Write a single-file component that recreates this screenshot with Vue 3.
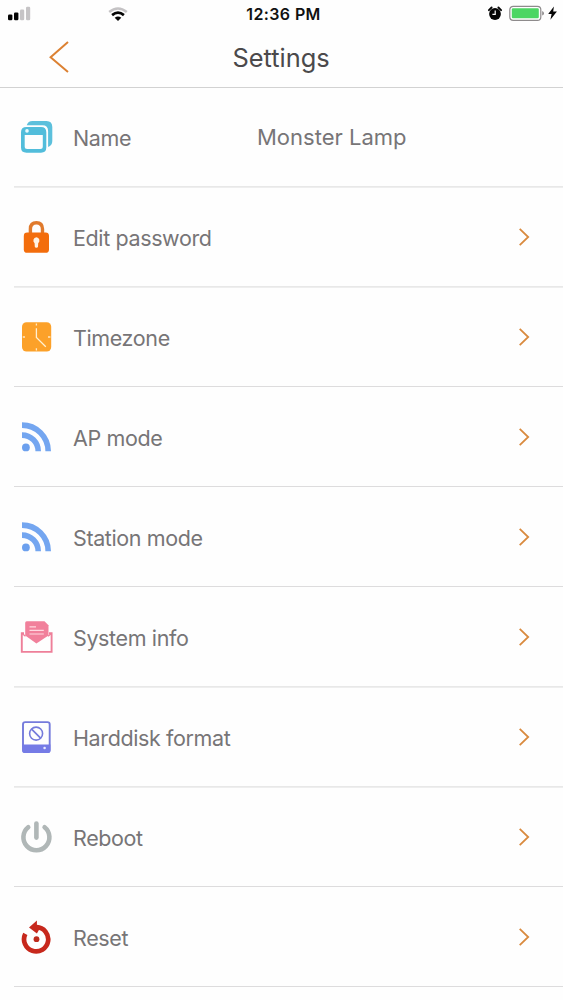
<script setup>
const rows = [
  { icon: 'windows', label: 'Name', value: 'Monster Lamp', soft: true },
  { icon: 'lock', label: 'Edit password', soft: true },
  { icon: 'clock', label: 'Timezone' },
  { icon: 'signal', label: 'AP mode' },
  { icon: 'signal', label: 'Station mode' },
  { icon: 'mail', label: 'System info', soft: true },
  { icon: 'disk', label: 'Harddisk format', soft: true },
  { icon: 'power', label: 'Reboot' },
  { icon: 'reset', label: 'Reset' },
]
</script>

<template>
  <main class="screen">
    <div class="status">
      <div class="left">
        <svg class="bars" width="24" height="16" viewBox="0 0 24 16">
          <rect x="0" y="8.6" width="4.4" height="5.6" rx="1.2" fill="#050505" />
          <rect x="6" y="6.4" width="4.4" height="7.8" rx="1.2" fill="#050505" />
          <rect x="12" y="3.6" width="4.2" height="10.6" rx="1.2" fill="#c6c4c6" />
          <rect x="18" y="0.8" width="4.2" height="13.4" rx="1.2" fill="#c6c4c6" />
        </svg>
        <svg class="wifi" width="20" height="15" viewBox="0 0 20 15" fill="none">
          <path d="M1.2 5Q10 -2 18.8 5" stroke="#c4c2c4" stroke-width="2.6" />
          <path d="M4.1 8.1Q10 3.2 15.9 8.1" stroke="#050505" stroke-width="2.7" />
          <path d="M6.7 10.8Q10 8.2 13.3 10.8L10 14Z" fill="#050505" />
        </svg>
      </div>
      <span class="time">12:36 PM</span>
      <div class="right">
        <svg width="14" height="15" viewBox="0 0 14 15" fill="none">
          <circle cx="7" cy="8" r="5.9" fill="#050505" />
          <path d="M0.9 4.2L3.6 1.5M13.1 4.2L10.4 1.5" stroke="#050505" stroke-width="1.8" stroke-linecap="round" />
          <path d="M7.2 4.5V8.4H4.4" stroke="#fff" stroke-width="1.2" />
        </svg>
        <svg class="battery" width="36" height="17" viewBox="0 0 36 17">
          <rect x="0.8" y="1.3" width="31" height="14" rx="3.4" fill="#fff" stroke="#8e8b8c" stroke-width="1.2" />
          <rect x="2.8" y="3.3" width="27" height="10" rx="1.2" fill="#4cd663" />
          <path d="M33.2 6Q35 6.7 35 8.3T33.2 10.6Z" fill="#8e8b8c" />
        </svg>
        <svg class="bolt" width="9" height="14" viewBox="0 0 9 14">
          <path d="M5.9 0.4L0.2 8H3.6L2.4 13.7L8.9 5.6H5.2Z" fill="#050505" />
        </svg>
      </div>
    </div>

    <header class="nav">
      <svg class="back" width="22" height="34" viewBox="0 0 22 34" fill="none">
        <path d="M20 2L2.6 17.2L20 32" stroke="#dc8132" stroke-width="2" />
      </svg>
      <h1>Settings</h1>
    </header>

    <ul class="list">
      <li v-for="row in rows" :key="row.label" :class="['row', { soft: row.soft }]">
        <svg class="icon" width="36" height="36" viewBox="0 0 36 36" fill="none">
          <g v-if="row.icon === 'windows'">
            <path d="M8.7 6.2Q10 1.9 14.5 1.9H28.5Q34.3 1.9 34.3 8V22Q34.3 26.4 30.1 28V12Q30.1 6.2 24.5 6.2Z" fill="#5cc0dc" />
            <path fill-rule="evenodd" d="M8.5 8H23Q28.3 8 28.3 13.3V28.5Q28.3 33.7 23 33.7H8.5Q3 33.7 3 28.5V13.3Q3 8 8.5 8ZM6.7 16V27.5Q6.7 30 9.2 30H22.3Q24.8 30 24.8 27.5V16Z" fill="#52bddb" />
            <circle cx="9" cy="11.9" r="1.8" fill="#e9fafd" />
          </g>
          <g v-else-if="row.icon === 'lock'">
            <path d="M12.4 15V10Q12.4 3.7 18.4 3.7T24.5 10V15" stroke="#e07a2c" stroke-width="3.4" />
            <rect x="5.8" y="13.6" width="25.2" height="20.2" rx="3.4" fill="#f36d0c" />
            <path d="M18.4 18.2A3.4 3.4 0 0 1 20.2 24.2L20 27.7Q19.8 28.8 18.4 28.8T16.8 27.7L16.6 24.2A3.4 3.4 0 0 1 18.4 18.2Z" fill="#fff3e3" />
          </g>
          <g v-else-if="row.icon === 'clock'">
            <rect x="4" y="3.2" width="29.2" height="29.4" rx="4.5" fill="#fca129" />
            <path d="M18.4 9.2V18.4L27.8 27.8" stroke="#fff0d2" stroke-width="1.3" />
            <path d="M18.4 4.6V6.6M18.4 29.2V31.4M4.8 18H7M30 18H32.4" stroke="#ffe9c4" stroke-width="1.3" />
          </g>
          <g v-else-if="row.icon === 'signal'">
            <path d="M4 6.1A26.2 26.2 0 0 1 30.2 32.3M4 16.1A16.2 16.2 0 0 1 20.2 32.3" stroke="#74a6f0" stroke-width="5.6" />
            <circle cx="7.9" cy="28.4" r="3.9" fill="#6ca0ee" />
          </g>
          <g v-else-if="row.icon === 'mail'">
            <path d="M6 14.3H3.8V32.9H33.6V14.3H31" stroke="#ee7f99" stroke-width="1.9" />
            <path d="M3.7 14.3L7.5 17.3M33.6 14.3L30 17.3" stroke="#ee7f99" stroke-width="1.4" />
            <path d="M8.7 2.2H26.5L30.5 6.2V16.5L18.4 24.5L7.2 16.5V3.7Q7.2 2.2 8.7 2.2Z" fill="#f1809b" />
            <path d="M11.5 7.9H18M11.5 11.4H25.8M11.5 15H25.8" stroke="#ffd8e0" stroke-width="1.1" />
          </g>
          <g v-else-if="row.icon === 'disk'">
            <rect x="5" y="3.1" width="26.7" height="30" rx="2.3" stroke="#757bdc" stroke-width="1.9" />
            <path d="M4.3 25.6H32.4V32Q32.4 34 30.4 34H6.3Q4.3 34 4.3 32Z" fill="#757be6" />
            <circle cx="18.1" cy="14.6" r="6.5" stroke="#757bdc" stroke-width="1.6" />
            <path d="M13.6 10.1L22.6 19.1" stroke="#757bdc" stroke-width="1.6" />
            <circle cx="26.6" cy="29" r="1.3" fill="#e9e9ff" />
          </g>
          <g v-else-if="row.icon === 'power'">
            <path d="M10.2 8.2A13 13 0 1 0 26.6 8.2" stroke="#b0b7b7" stroke-width="4.6" stroke-linecap="round" />
            <path d="M18.4 4.5V18.6" stroke="#b0b7b7" stroke-width="4.6" stroke-linecap="round" />
          </g>
          <g v-else>
            <path d="M7.3 14.9A12.1 12.1 0 1 0 18.5 8.2" stroke="#c7281c" stroke-width="4.7" />
            <path d="M11 8.4L18.9 1.6V5.8Q21.5 6.6 22.5 8.2L18.9 14.4Z" fill="#c7281c" />
            <circle cx="18.5" cy="20.2" r="2.9" fill="#bd2a1c" />
          </g>
        </svg>
        <span class="label">{{ row.label }}</span>
        <span v-if="row.value" class="value">{{ row.value }}</span>
        <svg v-else class="chevron" width="12" height="20" viewBox="0 0 12 20" fill="none">
          <path d="M1.7 1.8L10.2 10L1.7 18.2" stroke="#d98a3e" stroke-width="1.8" />
        </svg>
      </li>
    </ul>
  </main>
</template>

<style>
body {
  margin: 0;
  background: #fefefe;
}
</style>

<style scoped>
.screen {
  height: 1000px;
  overflow: hidden;
  background: #fefefe;
  font-family: Inter, "Liberation Sans", sans-serif;
}
.status {
  display: grid;
  grid-template-columns: 1fr auto 1fr;
  align-items: center;
  height: 28px;
  padding: 0 6px 0 8px;
  box-sizing: border-box;
}
.left,
.right {
  display: flex;
  align-items: center;
}
.right {
  justify-content: flex-end;
  padding-bottom: 2px;
}
.wifi {
  margin-left: 76px;
}
.battery {
  margin-left: 7px;
}
.bolt {
  margin-left: 3px;
}
.time {
  padding-left: 2px;
  font-size: 16px;
  font-weight: 600;
  letter-spacing: 0.4px;
  color: #111;
}
.nav {
  display: grid;
  grid-template-columns: 80px 1fr 80px;
  align-items: center;
  height: 60px;
  padding-bottom: 2px;
  box-sizing: border-box;
  border-bottom: 1px solid #d2d2d2;
}
.back {
  margin-left: 48px;
}
h1 {
  margin: 0;
  padding: 2px 1px 0 0;
  text-align: center;
  font-size: 25.4px;
  font-weight: 400;
  line-height: 30px;
  color: #4b494b;
}
.list {
  margin: -1px 0 0 14px;
  padding: 0;
  list-style: none;
}
.row {
  display: flex;
  align-items: center;
  height: 100px;
  box-sizing: border-box;
  padding: 0 33px 0 4px;
  border-bottom: 1px solid #dddcdd;
}
.row.soft {
  border-bottom-color: #e8e8e8;
  box-shadow: 0 1px #eeeeee;
}
.label {
  width: 184px;
  margin-left: 19px;
  font-size: 21.5px;
  line-height: 28px;
  letter-spacing: -0.38px;
  padding-top: 2px;
  color: #777577;
  white-space: nowrap;
}
.value {
  font-size: 22px;
  line-height: 28px;
  color: #777577;
}
.chevron {
  margin-left: auto;
}
</style>
